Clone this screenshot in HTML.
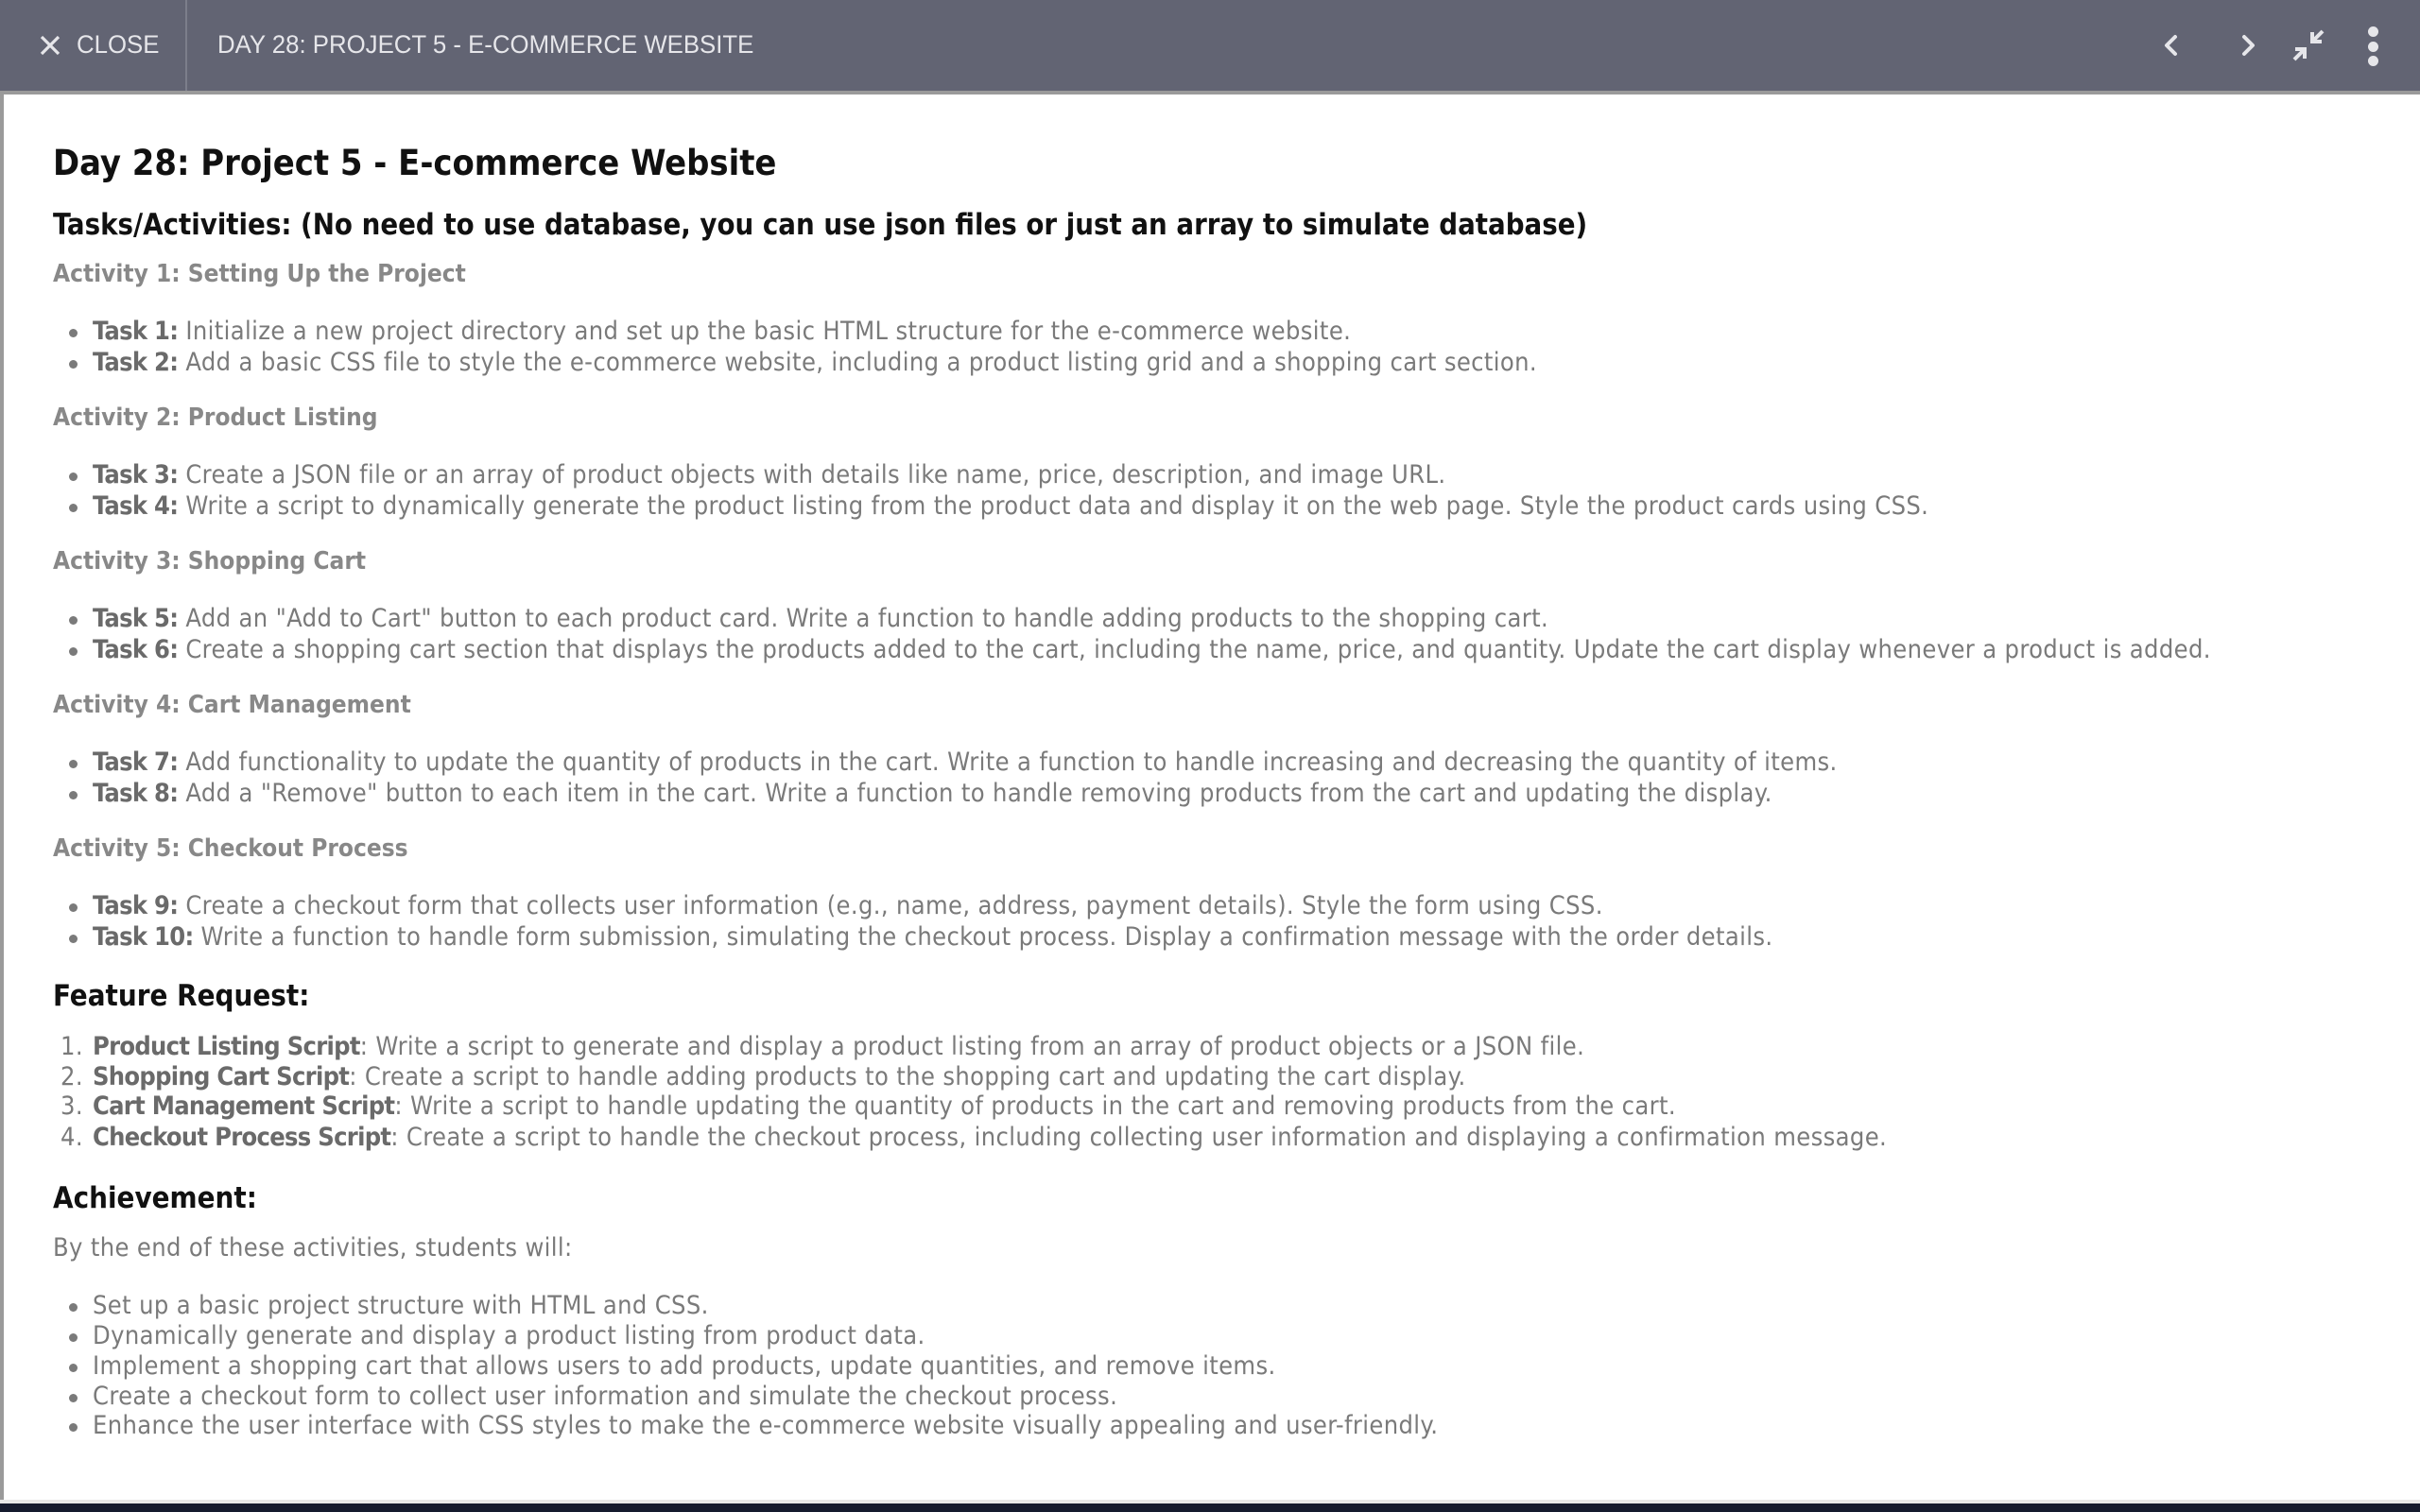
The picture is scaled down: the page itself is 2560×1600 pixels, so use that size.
<!DOCTYPE html>
<html><head><meta charset="utf-8"><style>
*{margin:0;padding:0;box-sizing:border-box}
html,body{width:2560px;height:1600px;overflow:hidden;background:#151b2e}
#hdr{position:absolute;left:0;top:0;width:2560px;height:96px;background:#626473;color:#e6e6ea;font-family:"Liberation Sans",sans-serif;font-size:27px}
#hdr .t{position:absolute;top:0;line-height:94px;transform:scaleX(0.955);transform-origin:left center;white-space:nowrap}
#div{position:absolute;left:196px;top:0;width:2px;height:96px;background:#7c7e8b}
#page{position:absolute;left:0;top:96px;width:2560px;height:1495px;background:#9a9a9a}
#inner{position:absolute;left:4px;top:4px;right:0;bottom:4px;background:#fff}
#foot{position:absolute;left:0;top:1587px;width:2560px;height:4px;background:#e8e8e8}
.l{position:absolute;white-space:nowrap;font-family:"DejaVu Sans Condensed","DejaVu Sans",sans-serif;color:#7a7a7a;font-size:27px;letter-spacing:0.37px;line-height:32px}
.l b{color:#6a6a6a;letter-spacing:-0.7px}
.h1{font-size:37.7px;letter-spacing:0;font-weight:bold;color:#111;line-height:50px}
.h2{font-size:30.8px;letter-spacing:0;font-weight:bold;color:#111;line-height:44px}
.h3{font-size:31px;letter-spacing:0;font-weight:bold;color:#111;line-height:40px}
.a{font-weight:bold;color:#888;font-size:26px;letter-spacing:0}
.d{position:absolute;width:9px;height:9px;border-radius:50%;background:#7a7a7a}
</style></head><body>
<div id="hdr">
<svg style="position:absolute;left:42px;top:37px" width="22" height="22" viewBox="0 0 22 22"><path d="M2 2L20 20M20 2L2 20" stroke="#e6e6ea" stroke-width="3.2"/></svg>
<div class="t" style="left:81px">CLOSE</div>
<div id="div"></div>
<div class="t" style="left:230px">DAY 28: PROJECT 5 - E-COMMERCE WEBSITE</div>
<svg style="position:absolute;left:2285px;top:34px" width="24" height="28" viewBox="0 0 24 28"><path d="M16 5L7 14L16 23" stroke="#e6e6ea" stroke-width="4" fill="none" stroke-linecap="round" stroke-linejoin="round"/></svg>
<svg style="position:absolute;left:2366px;top:34px" width="24" height="28" viewBox="0 0 24 28"><path d="M8 5L17 14L8 23" stroke="#e6e6ea" stroke-width="4" fill="none" stroke-linecap="round" stroke-linejoin="round"/></svg>
<svg style="position:absolute;left:2424px;top:30px" width="36" height="36" viewBox="0 0 36 36" fill="none" stroke="#e6e6ea" stroke-width="4"><path d="M33 3L22 14M22 4V14H32"/><path d="M3 33L14 22M4 22H14V32"/></svg>
<div style="position:absolute;left:2505px;top:28px;width:11px;height:11px;border-radius:50%;background:#e6e6ea"></div>
<div style="position:absolute;left:2505px;top:44px;width:11px;height:11px;border-radius:50%;background:#e6e6ea"></div>
<div style="position:absolute;left:2505px;top:59px;width:11px;height:11px;border-radius:50%;background:#e6e6ea"></div>
</div>
<div id="page"><div id="inner"></div></div>
<div id="foot"></div>

<div class="l h1" style="left:56px;top:147px">Day 28: Project 5 - E-commerce Website</div>
<div class="l h2" style="left:56px;top:216px">Tasks/Activities: (No need to use database, you can use json files or just an array to simulate database)</div>

<div class="l a" style="left:56px;top:274px">Activity 1: Setting Up the Project</div>
<div class="d" style="left:73px;top:348px"></div><div class="l" style="left:98px;top:335px"><b>Task 1:</b> Initialize a new project directory and set up the basic HTML structure for the e-commerce website.</div>
<div class="d" style="left:73px;top:381px"></div><div class="l" style="left:98px;top:368px"><b>Task 2:</b> Add a basic CSS file to style the e-commerce website, including a product listing grid and a shopping cart section.</div>

<div class="l a" style="left:56px;top:426px">Activity 2: Product Listing</div>
<div class="d" style="left:73px;top:500px"></div><div class="l" style="left:98px;top:487px"><b>Task 3:</b> Create a JSON file or an array of product objects with details like name, price, description, and image URL.</div>
<div class="d" style="left:73px;top:533px"></div><div class="l" style="left:98px;top:520px"><b>Task 4:</b> Write a script to dynamically generate the product listing from the product data and display it on the web page. Style the product cards using CSS.</div>

<div class="l a" style="left:56px;top:578px">Activity 3: Shopping Cart</div>
<div class="d" style="left:73px;top:652px"></div><div class="l" style="left:98px;top:639px"><b>Task 5:</b> Add an "Add to Cart" button to each product card. Write a function to handle adding products to the shopping cart.</div>
<div class="d" style="left:73px;top:685px"></div><div class="l" style="left:98px;top:672px"><b>Task 6:</b> Create a shopping cart section that displays the products added to the cart, including the name, price, and quantity. Update the cart display whenever a product is added.</div>

<div class="l a" style="left:56px;top:730px">Activity 4: Cart Management</div>
<div class="d" style="left:73px;top:804px"></div><div class="l" style="left:98px;top:791px"><b>Task 7:</b> Add functionality to update the quantity of products in the cart. Write a function to handle increasing and decreasing the quantity of items.</div>
<div class="d" style="left:73px;top:837px"></div><div class="l" style="left:98px;top:824px"><b>Task 8:</b> Add a "Remove" button to each item in the cart. Write a function to handle removing products from the cart and updating the display.</div>

<div class="l a" style="left:56px;top:882px">Activity 5: Checkout Process</div>
<div class="d" style="left:73px;top:956px"></div><div class="l" style="left:98px;top:943px"><b>Task 9:</b> Create a checkout form that collects user information (e.g., name, address, payment details). Style the form using CSS.</div>
<div class="d" style="left:73px;top:989px"></div><div class="l" style="left:98px;top:976px"><b>Task 10:</b> Write a function to handle form submission, simulating the checkout process. Display a confirmation message with the order details.</div>

<div class="l h3" style="left:56px;top:1034px">Feature Request:</div>
<div class="l" style="left:64px;top:1092px">1. <b style="margin-left:2px">Product Listing Script</b>: Write a script to generate and display a product listing from an array of product objects or a JSON file.</div>
<div class="l" style="left:64px;top:1124px">2. <b style="margin-left:2px">Shopping Cart Script</b>: Create a script to handle adding products to the shopping cart and updating the cart display.</div>
<div class="l" style="left:64px;top:1155px">3. <b style="margin-left:2px">Cart Management Script</b>: Write a script to handle updating the quantity of products in the cart and removing products from the cart.</div>
<div class="l" style="left:64px;top:1188px">4. <b style="margin-left:2px">Checkout Process Script</b>: Create a script to handle the checkout process, including collecting user information and displaying a confirmation message.</div>

<div class="l h3" style="left:56px;top:1248px">Achievement:</div>
<div class="l" style="left:56px;top:1305px">By the end of these activities, students will:</div>
<div class="d" style="left:73px;top:1379px"></div><div class="l" style="left:98px;top:1366px">Set up a basic project structure with HTML and CSS.</div>
<div class="d" style="left:73px;top:1411px"></div><div class="l" style="left:98px;top:1398px">Dynamically generate and display a product listing from product data.</div>
<div class="d" style="left:73px;top:1443px"></div><div class="l" style="left:98px;top:1430px">Implement a shopping cart that allows users to add products, update quantities, and remove items.</div>
<div class="d" style="left:73px;top:1475px"></div><div class="l" style="left:98px;top:1462px">Create a checkout form to collect user information and simulate the checkout process.</div>
<div class="d" style="left:73px;top:1506px"></div><div class="l" style="left:98px;top:1493px">Enhance the user interface with CSS styles to make the e-commerce website visually appealing and user-friendly.</div>
</body></html>
